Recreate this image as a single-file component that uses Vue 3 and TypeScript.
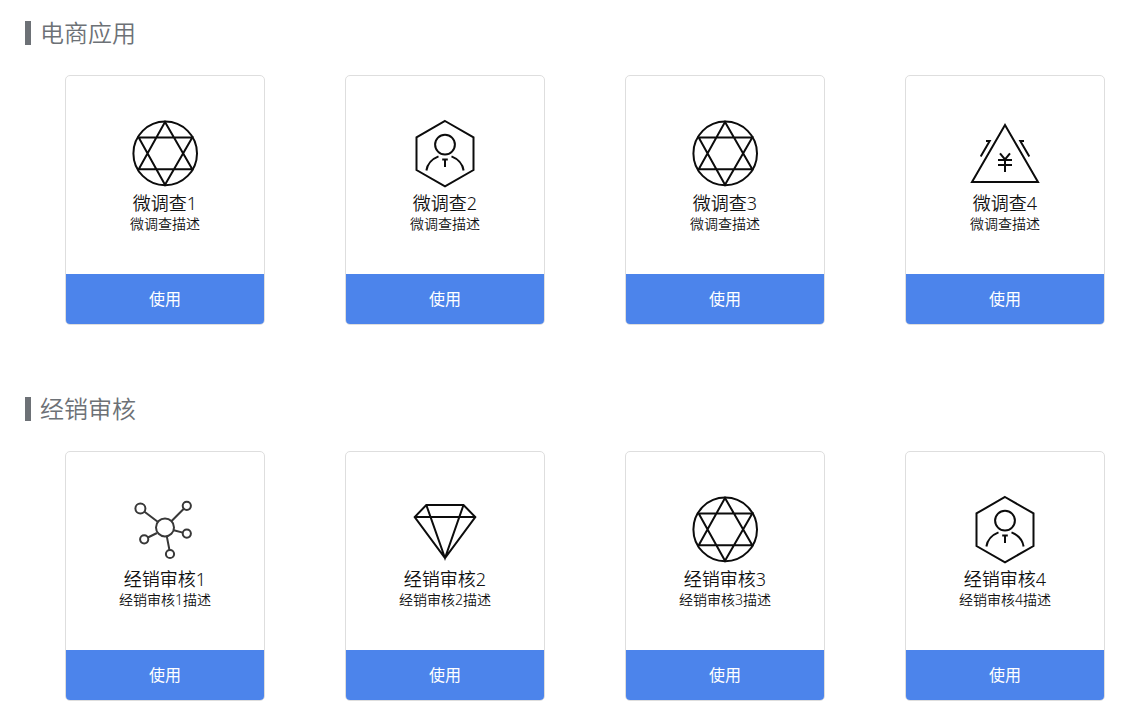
<script setup lang="ts">
type IconName = 'star' | 'person' | 'triangle' | 'network' | 'diamond'

interface AppCard {
  title: string
  description: string
  icon: IconName
}

interface AppSection {
  title: string
  cards: AppCard[]
}

const sections: AppSection[] = [
  {
    title: '电商应用',
    cards: [
      { title: '微调查1', description: '微调查描述', icon: 'star' },
      { title: '微调查2', description: '微调查描述', icon: 'person' },
      { title: '微调查3', description: '微调查描述', icon: 'star' },
      { title: '微调查4', description: '微调查描述', icon: 'triangle' },
    ],
  },
  {
    title: '经销审核',
    cards: [
      { title: '经销审核1', description: '经销审核1描述', icon: 'network' },
      { title: '经销审核2', description: '经销审核2描述', icon: 'diamond' },
      { title: '经销审核3', description: '经销审核3描述', icon: 'star' },
      { title: '经销审核4', description: '经销审核4描述', icon: 'person' },
    ],
  },
]
</script>

<template>
  <main class="page">
    <section v-for="section in sections" :key="section.title" class="section">
      <h2 class="heading">{{ section.title }}</h2>
      <div class="cards">
        <article v-for="card in section.cards" :key="card.title" class="card">
          <div class="body">
            <svg class="icon" :class="card.icon" viewBox="0 0 80 80" aria-hidden="true">
              <g v-if="card.icon === 'star'">
                <circle cx="40.2" cy="41.4" r="31.8" />
                <path d="M40 10 67.3 57.3H13.7ZM40 72.7 13.7 25.6H67.3Z" />
              </g>
              <g v-else-if="card.icon === 'person'">
                <path d="M40 9 68.5 25.4V58L40 74.3 11.5 58V25.4Z" />
                <circle cx="40" cy="32.6" r="9.9" />
                <path d="M33.5 44.4C27 47 22.5 51.5 21.4 58.5M46.5 44.4C53 47 57.5 51.5 58.6 58.5M37.2 47.5H42.8M40 47.5V55" />
              </g>
              <g v-else-if="card.icon === 'triangle'">
                <path d="M40 13 7 70H73Z" />
                <path d="M15.7 44.5 24.7 29H21M64.3 44.5 55.3 29H59" />
                <path d="M35 41.3 40 47.5 45 41.3M33 48H47M33 53H47M40 47V60" />
              </g>
              <g v-else-if="card.icon === 'network'">
                <circle cx="40" cy="39.4" r="9" />
                <circle cx="15.4" cy="20.6" r="5" />
                <circle cx="61.8" cy="17.8" r="4.1" />
                <circle cx="19.2" cy="51.3" r="4.1" />
                <circle cx="61.8" cy="45.6" r="4.1" />
                <circle cx="45" cy="66" r="4.1" />
                <path d="M19.5 23.7 32.7 33.8M58.8 20.8 46.6 33M22.9 49.5 32 45M57.8 44.6 48.8 42.2M44.4 61.8 41.8 48.4" />
              </g>
              <g v-else>
                <path d="M21.3 17H58.5L70.3 29 40 70 9.7 29ZM9.7 29H70.3M21.3 17 40 70 58.5 17" />
              </g>
            </svg>
            <h3 class="title">{{ card.title }}</h3>
            <p class="description">{{ card.description }}</p>
          </div>
          <button type="button" class="use">使用</button>
        </article>
      </div>
    </section>
  </main>
</template>

<style>
body {
  margin: 0;
  background: #fff;
}
</style>

<style scoped>
.page {
  padding: 21px 0 0 25px;
  font-family: "Noto Sans", "Noto Sans CJK SC", sans-serif;
  color: #101010;
}

.section {
  padding-bottom: 72px;
}

.section:last-child {
  padding-bottom: 24px;
}

.heading {
  margin: 0;
  padding-left: 9px;
  border-left: 6px solid #6d7176;
  font-size: 24px;
  line-height: 24px;
  font-weight: 350;
  color: #6d7176;
}

.cards {
  display: flex;
  flex-wrap: wrap;
  gap: 40px 80px;
  margin: 30px 0 0 40px;
}

.card {
  box-sizing: border-box;
  width: 200px;
  border: 1px solid #dedede;
  border-radius: 5px;
  overflow: hidden;
}

.body {
  display: flex;
  flex-direction: column;
  align-items: center;
  padding: 36px 0 40px;
}

.icon {
  width: 80px;
  height: 80px;
  fill: none;
  stroke: #0c0c0c;
  stroke-width: 2;
}

.icon.network {
  stroke: #383838;
}

.title {
  margin: 0;
  font-size: 18px;
  line-height: 22px;
  font-weight: 350;
}

.description {
  margin: 0;
  font-size: 14px;
  line-height: 20px;
  font-weight: 350;
}

.use {
  display: block;
  width: 100%;
  height: 50px;
  padding: 0 0 2px;
  border: 0;
  background: #4c84eb;
  color: #fff;
  font-family: inherit;
  font-size: 16px;
  cursor: pointer;
}
</style>
